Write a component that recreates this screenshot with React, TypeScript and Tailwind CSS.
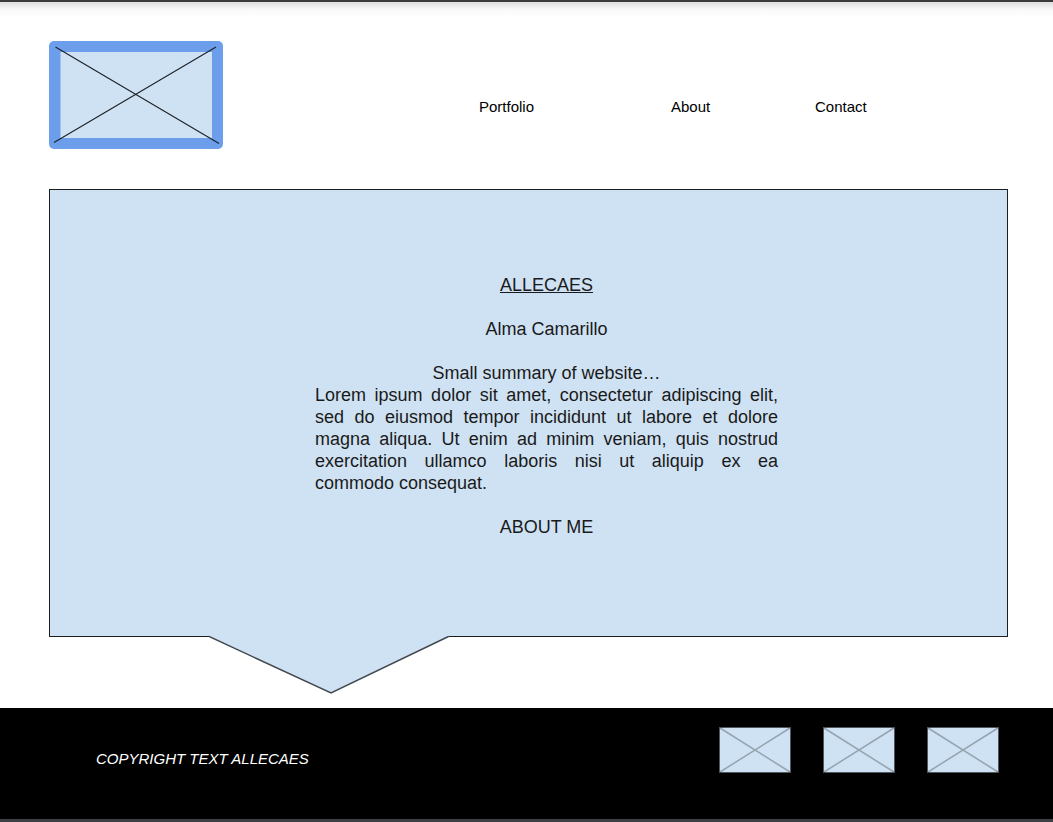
const navItems = [
  { label: "Portfolio", href: "#portfolio" },
  { label: "About", href: "#about" },
  { label: "Contact", href: "#contact" },
];

const socialLinks = ["Social link one", "Social link two", "Social link three"];

function Logo() {
  return (
    <svg width="174" height="108" viewBox="0 0 174 108" role="img" aria-label="Logo" className="block">
      <rect width="174" height="108" rx="5" fill="#6d9eeb" />
      <rect x="11.500" y="11" width="151.500" height="86" fill="#cfe2f3" />
      <path d="M6.500 6L170 102.500M167 6L5 101.500" stroke="#1c2126" strokeWidth="1.100" fill="none" />
    </svg>
  );
}

function CrossedBox() {
  return (
    <svg width="72" height="46" viewBox="0 0 72 46" aria-hidden="true" className="block">
      <rect x="0.500" y="0.500" width="71" height="45" fill="#cfe2f3" stroke="#50585f" />
      <path d="M1 1L71 45M71 1L1 45" stroke="#000000" strokeOpacity="0.280" strokeWidth="1.500" fill="none" />
    </svg>
  );
}

function Hero() {
  return (
    <section className="mr-[45px] ml-[49px]">
      <div className="flex justify-center border border-[#1b1d1f] bg-[#cfe2f3] pt-[84px] pb-[98px] pl-9">
        <div className="w-full max-w-[463px] text-center text-lg leading-[22px] text-[#1a1a1a]">
          <h1 className="mb-[22px] underline">ALLECAES</h1>
          <p className="mb-[22px]">Alma Camarillo</p>
          <p>Small summary of website…</p>
          <p className="mb-[22px] text-justify">
            Lorem ipsum dolor sit amet, consectetur adipiscing elit, sed do eiusmod tempor incididunt ut labore et
            dolore magna aliqua. Ut enim ad minim veniam, quis nostrud exercitation ullamco laboris nisi ut aliquip ex
            ea <span className="whitespace-nowrap">commodo consequat.</span>
          </p>
          <h2>ABOUT ME</h2>
        </div>
      </div>
      <svg width="241" height="59" viewBox="0 0 241 59" aria-hidden="true" className="-mt-0.5 ml-40 block">
        <path d="M0 0V1.500L122 58L239.500 1.500V0Z" fill="#cfe2f3" />
        <path d="M0 1.500L122 58L239.500 1.500" fill="none" stroke="#434950" strokeWidth="1.500" />
      </svg>
    </section>
  );
}

export default function App() {
  return (
    <div className="flex min-h-screen flex-col border-t-2 border-[#3a3838] bg-white font-['Liberation_Sans',Arial,sans-serif] text-black">
      <header className="flex items-center bg-linear-to-b from-[#dedede] via-[#f8f8f8] via-4% to-white to-8% pt-[39px] pb-10 pl-[49px]">
        <a href="#home">
          <Logo />
        </a>
        <nav className="ml-64 grid grid-cols-[192px_144px_auto] pt-6 text-[15px] leading-5">
          {navItems.map((item) => (
            <a key={item.label} href={item.href}>
              {item.label}
            </a>
          ))}
        </nav>
      </header>
      <main>
        <Hero />
      </main>
      <footer className="mt-auto flex items-start justify-between border-b-[3px] border-[#3c4045] bg-black pt-[19px] pr-[54px] pb-[46px] pl-24">
        <p className="pt-[22px] text-[15px] leading-5 text-white italic">COPYRIGHT TEXT ALLECAES</p>
        <div className="flex gap-8">
          {socialLinks.map((label) => (
            <a key={label} href="#social" aria-label={label}>
              <CrossedBox />
            </a>
          ))}
        </div>
      </footer>
    </div>
  );
}
